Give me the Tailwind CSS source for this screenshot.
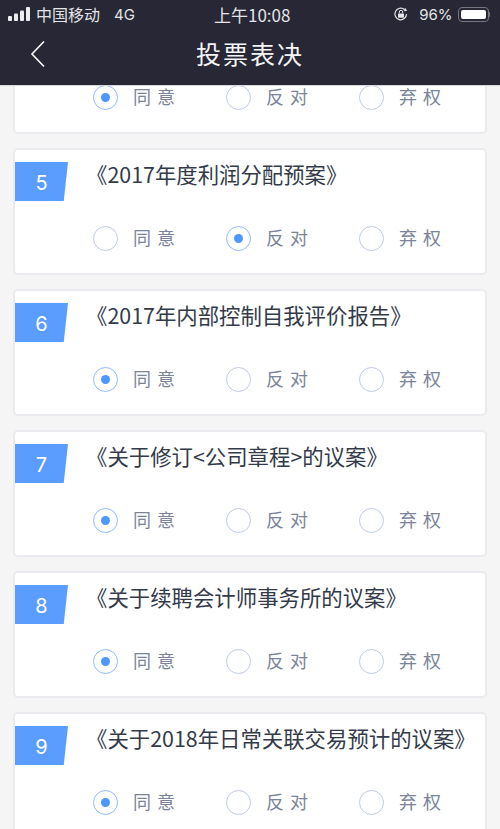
<!doctype html>
<html lang="zh-CN">
<head>
<meta charset="utf-8">
<script src="https://cdn.jsdelivr.net/npm/@tailwindcss/browser@4"></script>
</head>
<body class="m-0">
<div class="w-[500px] h-[829px] overflow-hidden bg-[#f5f5f5] flex flex-col font-['Noto_Sans_CJK_SC','Noto_Sans',sans-serif]">
  <header class="h-[85px] shrink-0 bg-[#272735] text-white">
    <div class="h-[28px] relative flex items-center pl-2 pr-[10px] text-[16px] text-[#e4e4e8]">
      <svg width="22" height="14" viewBox="0 0 22 14" class="shrink-0 mr-[6px]" fill="#ededf0"><rect x="0" y="9" width="4" height="5" rx="1"/><rect x="6" y="6.5" width="4" height="7.5" rx="1"/><rect x="12" y="3.5" width="4" height="10.5" rx="1"/><rect x="18" y="0" width="4" height="14" rx="1"/></svg>
      <span class="leading-none">中国移动</span>
      <span class="ml-[14px] leading-none font-['Inter'] text-[15px]">4G</span>
      <span class="absolute left-[214px] leading-none text-[17px]">上午10:08</span>
      <svg width="16" height="16" viewBox="0 0 16 16" class="ml-auto mr-[10px]" fill="none"><path d="M13.5 8A5.8 5.8 0 1 1 11.6 3.7" stroke="#e4e4e8" stroke-width="1.2"/><path d="M12 1.8l2.2 3-3.4.4z" fill="#e4e4e8"/><rect x="5" y="7.4" width="6" height="4.4" rx=".7" fill="#e4e4e8"/><path d="M6.3 7.4V6a1.7 1.7 0 0 1 3.4 0v1.4" stroke="#e4e4e8" stroke-width="1"/></svg>
      <span class="leading-none font-['Inter'] text-[15px] mr-[5px]">96%</span>
      <div class="flex items-center">
        <div class="w-[31px] h-[15px] rounded-[4px] border border-[#77777f] p-[2px]"><div class="h-full w-full bg-white rounded-[2px]"></div></div>
        <div class="w-[1.5px] h-[5px] bg-[#77777f] rounded-r"></div>
      </div>
    </div>
    <div class="h-[57px] relative flex items-center justify-center">
      <svg width="16" height="28" viewBox="0 0 16 28" class="absolute left-[30px] top-[12px]" fill="none"><path d="M14 1.5L2 14l12 12.5" stroke="#fff" stroke-width="1.6"/></svg>
      <h1 class="text-[25px] font-normal tracking-[2px] -mt-[6px] leading-none text-[#f4f4f6]">投票表决</h1>
    </div>
  </header>
  <main class="flex-1 overflow-hidden border-t border-[#d8d8dc] px-[13px]">
    <div class="-mt-[79px] flex flex-col gap-[14px]">

      <section class="h-[127px] shrink-0 rounded-[5px] border-2 border-[#ebebef] bg-white flex flex-col">
        <div class="h-[51px] shrink-0"></div>
        <div class="mt-[24px] grid grid-cols-[133px_133px_133px] pl-[78px]">
          <div class="flex items-center gap-[15px]"><span class="w-[25px] h-[25px] rounded-full border border-[#8fbcff] flex items-center justify-center"><span class="w-[9px] h-[9px] rounded-full bg-[#4e97ff]"></span></span><span class="mb-[2px] text-[18px] leading-[24px] tracking-[6px] text-[#7b8499]">同意</span></div>
          <div class="flex items-center gap-[15px]"><span class="w-[25px] h-[25px] rounded-full border border-[#bfcbe2]"></span><span class="mb-[2px] text-[18px] leading-[24px] tracking-[6px] text-[#7b8499]">反对</span></div>
          <div class="flex items-center gap-[15px]"><span class="w-[25px] h-[25px] rounded-full border border-[#bfcbe2]"></span><span class="mb-[2px] text-[18px] leading-[24px] tracking-[6px] text-[#7b8499]">弃权</span></div>
        </div>
      </section>

      <section class="h-[127px] shrink-0 rounded-[5px] border-2 border-[#ebebef] bg-white flex flex-col">
        <div class="h-[51px] shrink-0 flex items-end">
          <div class="w-[53px] h-[39px] bg-[#5a9dff] [clip-path:polygon(0_0,100%_0,92%_100%,0_100%)] flex items-center justify-center text-white text-[20px] leading-none font-['Inter'] pt-[2px]">5</div>
          <h2 class="ml-[18px] -mb-[1px] h-[42px] font-normal text-[21.4px] leading-[28px] text-[#333a4a] whitespace-nowrap">《2017年度利润分配预案》</h2>
        </div>
        <div class="mt-[24px] grid grid-cols-[133px_133px_133px] pl-[78px]">
          <div class="flex items-center gap-[15px]"><span class="w-[25px] h-[25px] rounded-full border border-[#bfcbe2]"></span><span class="mb-[2px] text-[18px] leading-[24px] tracking-[6px] text-[#7b8499]">同意</span></div>
          <div class="flex items-center gap-[15px]"><span class="w-[25px] h-[25px] rounded-full border border-[#8fbcff] flex items-center justify-center"><span class="w-[9px] h-[9px] rounded-full bg-[#4e97ff]"></span></span><span class="mb-[2px] text-[18px] leading-[24px] tracking-[6px] text-[#7b8499]">反对</span></div>
          <div class="flex items-center gap-[15px]"><span class="w-[25px] h-[25px] rounded-full border border-[#bfcbe2]"></span><span class="mb-[2px] text-[18px] leading-[24px] tracking-[6px] text-[#7b8499]">弃权</span></div>
        </div>
      </section>

      <section class="h-[127px] shrink-0 rounded-[5px] border-2 border-[#ebebef] bg-white flex flex-col">
        <div class="h-[51px] shrink-0 flex items-end">
          <div class="w-[53px] h-[39px] bg-[#5a9dff] [clip-path:polygon(0_0,100%_0,92%_100%,0_100%)] flex items-center justify-center text-white text-[20px] leading-none font-['Inter'] pt-[2px]">6</div>
          <h2 class="ml-[18px] -mb-[1px] h-[42px] font-normal text-[21.4px] leading-[28px] text-[#333a4a] whitespace-nowrap">《2017年内部控制自我评价报告》</h2>
        </div>
        <div class="mt-[24px] grid grid-cols-[133px_133px_133px] pl-[78px]">
          <div class="flex items-center gap-[15px]"><span class="w-[25px] h-[25px] rounded-full border border-[#8fbcff] flex items-center justify-center"><span class="w-[9px] h-[9px] rounded-full bg-[#4e97ff]"></span></span><span class="mb-[2px] text-[18px] leading-[24px] tracking-[6px] text-[#7b8499]">同意</span></div>
          <div class="flex items-center gap-[15px]"><span class="w-[25px] h-[25px] rounded-full border border-[#bfcbe2]"></span><span class="mb-[2px] text-[18px] leading-[24px] tracking-[6px] text-[#7b8499]">反对</span></div>
          <div class="flex items-center gap-[15px]"><span class="w-[25px] h-[25px] rounded-full border border-[#bfcbe2]"></span><span class="mb-[2px] text-[18px] leading-[24px] tracking-[6px] text-[#7b8499]">弃权</span></div>
        </div>
      </section>

      <section class="h-[127px] shrink-0 rounded-[5px] border-2 border-[#ebebef] bg-white flex flex-col">
        <div class="h-[51px] shrink-0 flex items-end">
          <div class="w-[53px] h-[39px] bg-[#5a9dff] [clip-path:polygon(0_0,100%_0,92%_100%,0_100%)] flex items-center justify-center text-white text-[20px] leading-none font-['Inter'] pt-[2px]">7</div>
          <h2 class="ml-[18px] -mb-[1px] h-[42px] font-normal text-[21.4px] leading-[28px] text-[#333a4a] whitespace-nowrap">《关于修订&lt;公司章程&gt;的议案》</h2>
        </div>
        <div class="mt-[24px] grid grid-cols-[133px_133px_133px] pl-[78px]">
          <div class="flex items-center gap-[15px]"><span class="w-[25px] h-[25px] rounded-full border border-[#8fbcff] flex items-center justify-center"><span class="w-[9px] h-[9px] rounded-full bg-[#4e97ff]"></span></span><span class="mb-[2px] text-[18px] leading-[24px] tracking-[6px] text-[#7b8499]">同意</span></div>
          <div class="flex items-center gap-[15px]"><span class="w-[25px] h-[25px] rounded-full border border-[#bfcbe2]"></span><span class="mb-[2px] text-[18px] leading-[24px] tracking-[6px] text-[#7b8499]">反对</span></div>
          <div class="flex items-center gap-[15px]"><span class="w-[25px] h-[25px] rounded-full border border-[#bfcbe2]"></span><span class="mb-[2px] text-[18px] leading-[24px] tracking-[6px] text-[#7b8499]">弃权</span></div>
        </div>
      </section>

      <section class="h-[127px] shrink-0 rounded-[5px] border-2 border-[#ebebef] bg-white flex flex-col">
        <div class="h-[51px] shrink-0 flex items-end">
          <div class="w-[53px] h-[39px] bg-[#5a9dff] [clip-path:polygon(0_0,100%_0,92%_100%,0_100%)] flex items-center justify-center text-white text-[20px] leading-none font-['Inter'] pt-[2px]">8</div>
          <h2 class="ml-[18px] -mb-[1px] h-[42px] font-normal text-[21.4px] leading-[28px] text-[#333a4a] whitespace-nowrap">《关于续聘会计师事务所的议案》</h2>
        </div>
        <div class="mt-[24px] grid grid-cols-[133px_133px_133px] pl-[78px]">
          <div class="flex items-center gap-[15px]"><span class="w-[25px] h-[25px] rounded-full border border-[#8fbcff] flex items-center justify-center"><span class="w-[9px] h-[9px] rounded-full bg-[#4e97ff]"></span></span><span class="mb-[2px] text-[18px] leading-[24px] tracking-[6px] text-[#7b8499]">同意</span></div>
          <div class="flex items-center gap-[15px]"><span class="w-[25px] h-[25px] rounded-full border border-[#bfcbe2]"></span><span class="mb-[2px] text-[18px] leading-[24px] tracking-[6px] text-[#7b8499]">反对</span></div>
          <div class="flex items-center gap-[15px]"><span class="w-[25px] h-[25px] rounded-full border border-[#bfcbe2]"></span><span class="mb-[2px] text-[18px] leading-[24px] tracking-[6px] text-[#7b8499]">弃权</span></div>
        </div>
      </section>

      <section class="h-[127px] shrink-0 rounded-[5px] border-2 border-[#ebebef] bg-white flex flex-col">
        <div class="h-[51px] shrink-0 flex items-end">
          <div class="w-[53px] h-[39px] bg-[#5a9dff] [clip-path:polygon(0_0,100%_0,92%_100%,0_100%)] flex items-center justify-center text-white text-[20px] leading-none font-['Inter'] pt-[2px]">9</div>
          <h2 class="ml-[18px] -mb-[1px] h-[42px] font-normal text-[21.4px] leading-[28px] text-[#333a4a] whitespace-nowrap">《关于2018年日常关联交易预计的议案》</h2>
        </div>
        <div class="mt-[24px] grid grid-cols-[133px_133px_133px] pl-[78px]">
          <div class="flex items-center gap-[15px]"><span class="w-[25px] h-[25px] rounded-full border border-[#8fbcff] flex items-center justify-center"><span class="w-[9px] h-[9px] rounded-full bg-[#4e97ff]"></span></span><span class="mb-[2px] text-[18px] leading-[24px] tracking-[6px] text-[#7b8499]">同意</span></div>
          <div class="flex items-center gap-[15px]"><span class="w-[25px] h-[25px] rounded-full border border-[#bfcbe2]"></span><span class="mb-[2px] text-[18px] leading-[24px] tracking-[6px] text-[#7b8499]">反对</span></div>
          <div class="flex items-center gap-[15px]"><span class="w-[25px] h-[25px] rounded-full border border-[#bfcbe2]"></span><span class="mb-[2px] text-[18px] leading-[24px] tracking-[6px] text-[#7b8499]">弃权</span></div>
        </div>
      </section>

    </div>
  </main>
</div>
</body>
</html>
